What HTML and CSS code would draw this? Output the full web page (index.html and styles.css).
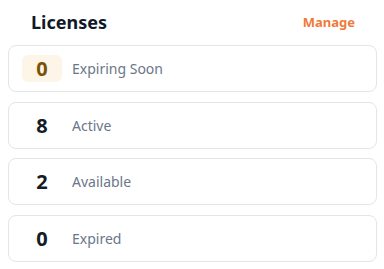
FILE: index.html
```html
<!DOCTYPE html>
<html>
<head>
<meta charset="utf-8">
<link rel="stylesheet" href="styles.css">
</head>
<body>
<div class="panel">
  <div class="header">
    <h2 class="title">Licenses</h2>
    <a class="manage">Manage</a>
  </div>
  <div class="list">
    <div class="card">
      <span class="count warn">0</span>
      <span class="label">Expiring Soon</span>
    </div>
    <div class="card">
      <span class="count">8</span>
      <span class="label">Active</span>
    </div>
    <div class="card">
      <span class="count">2</span>
      <span class="label">Available</span>
    </div>
    <div class="card">
      <span class="count">0</span>
      <span class="label">Expired</span>
    </div>
  </div>
</div>
</body>
</html>
```
FILE: styles.css
```css
html, body {
  margin: 0;
  padding: 0;
  background: #ffffff;
}
body {
  font-family: "Noto Sans", "Open Sans", sans-serif;
}
.panel {
  padding: 10px 7px 7px 8px;
}
.header {
  display: flex;
  align-items: center;
  justify-content: space-between;
  padding: 0 22px 0 23px;
  margin-bottom: 11px;
}
.title {
  margin: 0;
  font-size: 18px;
  line-height: 24px;
  font-weight: 700;
  color: #111827;
}
.manage {
  font-size: 13px;
  line-height: 18px;
  font-weight: 700;
  color: #f07a3b;
  cursor: pointer;
}
.list {
  display: flex;
  flex-direction: column;
  gap: 9.67px;
}
.card {
  display: flex;
  align-items: center;
  gap: 10px;
  border: 1px solid #e3e5e9;
  border-radius: 8px;
  padding: 9px 13px;
  background: #fff;
}
.count {
  width: 40px;
  height: 27px;
  border-radius: 6px;
  display: flex;
  align-items: center;
  justify-content: center;
  font-size: 20px;
  font-weight: 700;
  color: #161b26;
}
.count.warn {
  background: #fdf6e8;
  color: #7a5306;
}
.label {
  font-size: 14px;
  color: #6b7689;
}
```
